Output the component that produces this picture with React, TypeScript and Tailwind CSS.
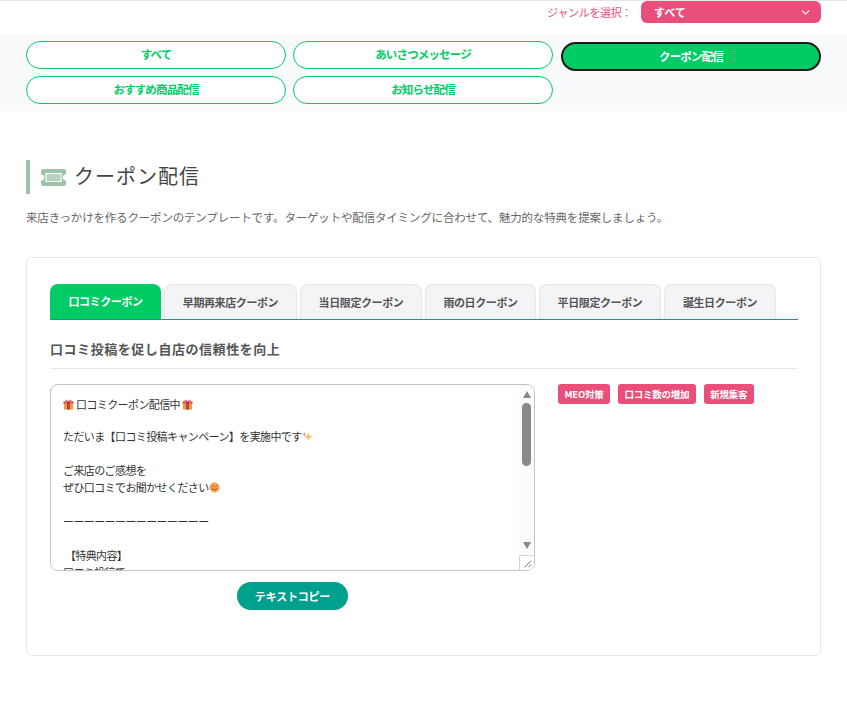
import { ChevronDown } from "lucide-react";

const genres = ["すべて", "あいさつメッセージ", "クーポン配信", "おすすめ商品配信", "お知らせ配信"];
const tabs = ["口コミクーポン", "早期再来店クーポン", "当日限定クーポン", "雨の日クーポン", "平日限定クーポン", "誕生日クーポン"];
const tabWidths = ["w-[111px]", "w-[133px]", "w-[122px]", "w-[111px]", "w-[122px]", "w-[112px]"];
const tags = ["MEO対策", "口コミ数の増加", "新規集客"];

const Gift = () => (
  <svg viewBox="0 0 12 12" className="inline-block w-[11px] h-[11px] align-[-1px]">
    <rect x="1" y="4" width="10" height="7.5" fill="#e2a13c" />
    <rect x="0.5" y="2.5" width="11" height="2.5" fill="#d9534f" />
    <rect x="4.5" y="2.5" width="3" height="9" fill="#c2334d" />
    <path d="M6 2.5 3.5 0.5 2.5 2zM6 2.5 8.5 0.5 9.5 2z" fill="#d9534f" />
  </svg>
);

const Sparkle = () => (
  <svg viewBox="0 0 12 12" className="inline-block w-[11px] h-[11px] align-[-1px]">
    <path d="M7 1.5 8.3 5 11.5 6.3 8.3 7.6 7 11 5.7 7.6 2.5 6.3 5.7 5z" fill="#fbbf6b" />
    <path d="M2.5 1 3.2 2.8 5 3.5 3.2 4.2 2.5 6 1.8 4.2 0 3.5 1.8 2.8z" fill="#f08a7b" />
  </svg>
);

const Smile = () => (
  <svg viewBox="0 0 12 12" className="inline-block w-[11px] h-[11px] align-[-1px]">
    <circle cx="6" cy="6" r="5.5" fill="#f5a04a" />
    <path d="M3 4.8q1-1 2 0M7 4.8q1-1 2 0" stroke="#7a4a20" strokeWidth="0.8" fill="none" />
    <path d="M3.2 7.2q2.8 2.6 5.6 0" stroke="#7a4a20" strokeWidth="0.9" fill="none" />
  </svg>
);

const Ticket = () => (
  <svg viewBox="1 0 23 17" preserveAspectRatio="none" className="w-[25px] h-[17px]">
    <path
      fillRule="evenodd"
      fill="#9cc3a9"
      d="M3 0h19a2 2 0 0 1 2 2v3.5a3 3 0 0 0 0 6V15a2 2 0 0 1-2 2H3a2 2 0 0 1-2-2v-3.5a3 3 0 0 0 0-6V2a2 2 0 0 1 2-2zM5 4v9h15V4z"
    />
    <rect x="6" y="5" width="13" height="7" fill="#b5d3bf" />
  </svg>
);

export default function App() {
  return (
    <div className="w-[847px] h-[721px] bg-white border-t border-[#e5e5e5] overflow-hidden font-['Noto_Sans_CJK_JP','Liberation_Sans',sans-serif] text-[#555]">
      <div className="flex items-center justify-end gap-[9px] pr-[26px] h-[22px]">
        <span className="text-[11px] tracking-[-0.35px] text-[#e94f7a]">ジャンルを選択：</span>
        <div className="flex items-center justify-between w-[180px] h-[22px] rounded-[6px] bg-[#e94f7a] pl-[13px] pr-[9px] text-white text-[11px] font-bold">
          <span>すべて</span>
          <ChevronDown className="w-[13px] h-[13px]" strokeWidth={2} />
        </div>
      </div>

      <div className="mt-[11px] bg-[#f8fafc] h-[77px] px-[26px] pt-[7px] grid grid-cols-[260px_260px_261px] grid-rows-[28px_28px] gap-x-[7px] gap-y-[7px] content-start">
        {genres.map((g) =>
          g === "クーポン配信" ? (
            <div key={g} className="h-[29px] mt-[1px] ml-[1px] rounded-full bg-[#00cc66] border-2 border-[#1a1a1a] flex items-center justify-center text-white text-[11.5px] font-bold tracking-[-0.85px]">
              {g}
            </div>
          ) : (
            <div key={g} className="h-[28px] rounded-full bg-white border border-[#00cc66] flex items-center justify-center text-[#00cc66] text-[11.5px] font-bold tracking-[-0.85px]">
              {g}
            </div>
          )
        )}
      </div>

      <div className="mt-[49px] mx-[26px] h-[34px] border-l-4 border-[#9cc3a9] pl-[11px] flex items-center gap-[8px]">
        <Ticket />
        <h1 className="text-[20px] leading-none text-[#444] tracking-[1px] pb-[2px]">クーポン配信</h1>
      </div>
      <p className="mt-[15px] mx-[26px] text-[11.5px] leading-[16px] text-[#666] tracking-[-0.18px]">
        来店きっかけを作るクーポンのテンプレートです。ターゲットや配信タイミングに合わせて、魅力的な特典を提案しましょう。
      </p>

      <div className="mt-[32px] mx-[26px] h-[399px] rounded-[6px] border border-[#e5e7eb] pl-[23px] pr-[22px] pt-[26px]">
        <div className="flex gap-[3px] border-b border-[#00a08f] h-[36px]">
          {tabs.map((t, i) => (
            <div
              key={t}
              className={
                i === 0
                  ? `${tabWidths[i]} h-[35px] rounded-t-[8px] bg-[#00cc66] text-white flex items-center justify-center text-[11px] font-bold tracking-[-0.4px]`
                  : `${tabWidths[i]} h-[35px] rounded-t-[8px] bg-[#f3f4f6] border border-b-0 border-[#e5e7eb] text-[#555] flex items-center justify-center text-[11px] font-bold tracking-[-0.4px]`
              }
            >
              {t}
            </div>
          ))}
        </div>

        <h2 className="mt-[19px] pb-[10px] border-b border-[#e5e7eb] text-[13px] leading-[19px] font-bold text-[#555] tracking-[0.55px]">
          口コミ投稿を促し自店の信頼性を向上
        </h2>

        <div className="mt-[15px] flex items-start">
          <div className="w-[485px] shrink-0">
            <div className="relative h-[187px] rounded-[8px] border border-[#c4c4c4] overflow-hidden bg-white">
              <div className="pl-[12px] pt-[11px] text-[11px] leading-[17px] tracking-[-0.6px] text-[#333] whitespace-pre-wrap">
                <div className="flex items-center gap-[2px]"><Gift />口コミクーポン配信中<Gift /></div>
                <div className="h-[15px]" />
                <div>ただいま【口コミ投稿キャンペーン】を実施中です<Sparkle /></div>
                <div className="h-[17px]" />
                <div>ご来店のご感想を</div>
                <div>ぜひ口コミでお聞かせください<Smile /></div>
                <div className="h-[17px]" />
                <div>ーーーーーーーーーーーーーー</div>
                <div className="h-[17px]" />
                <div> 【特典内容】</div>
                <div>口コミ投稿で</div>
              </div>
              <div className="absolute right-0 top-0 w-[15px] h-full bg-[#fbfbfb] flex flex-col items-center pt-[6px]">
                <div className="w-0 h-0 border-x-[4px] border-x-transparent border-b-[7px] border-b-[#8a8a8a]" />
                <div className="w-[9px] h-[63px] mt-[5px] rounded-full bg-[#8a8a8a]" />
                <div className="w-0 h-0 mt-[76px] border-x-[4px] border-x-transparent border-t-[7px] border-t-[#8a8a8a]" />
              </div>
              <div className="absolute right-0 bottom-0 w-[15px] h-[15px] bg-white border-l border-t border-[#d4d4d4]">
                <svg viewBox="0 0 15 15" className="w-[14px] h-[14px]">
                  <path d="M12 5 5 12M12 9 9 12" stroke="#666" strokeWidth="1" />
                </svg>
              </div>
            </div>
            <div className="mt-[11px] flex justify-center">
              <div className="w-[111px] h-[28px] rounded-full bg-[#00a08f] flex items-center justify-center text-white text-[11px] font-bold tracking-[-0.2px]">
                テキストコピー
              </div>
            </div>
          </div>

          <div className="ml-[23px] flex gap-[8px]">
            {tags.map((t) => (
              <span key={t} className="h-[20px] px-[6.5px] rounded-[3px] bg-[#e94f7a] text-white text-[9.5px] tracking-[-0.25px] font-bold flex items-center">
                {t}
              </span>
            ))}
          </div>
        </div>
      </div>
    </div>
  );
}
